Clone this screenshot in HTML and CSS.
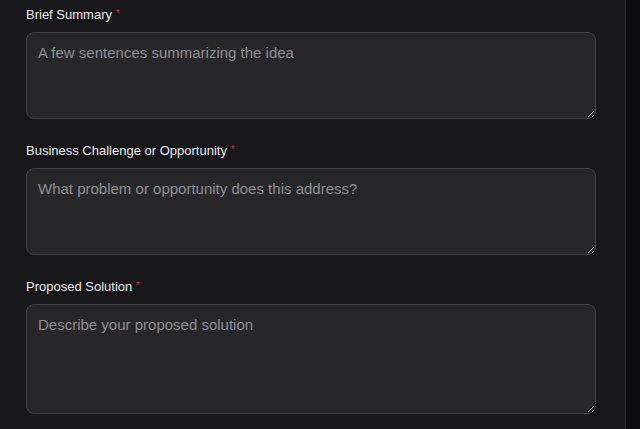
FILE: index.html
```html
<!DOCTYPE html>
<html lang="en">
<head>
<meta charset="utf-8">
<title>Idea form</title>
<link rel="stylesheet" href="styles.css">
</head>
<body>
<div class="layout">
  <main class="panel">
    <form class="form">
      <div class="field">
        <label class="label" for="summary">Brief Summary <span class="req">*</span></label>
        <textarea id="summary" class="input" placeholder="A few sentences summarizing the idea"></textarea>
      </div>
      <div class="field">
        <label class="label" for="challenge">Business Challenge or Opportunity <span class="req">*</span></label>
        <textarea id="challenge" class="input" placeholder="What problem or opportunity does this address?"></textarea>
      </div>
      <div class="field">
        <label class="label" for="solution">Proposed Solution <span class="req">*</span></label>
        <textarea id="solution" class="input input-tall" placeholder="Describe your proposed solution"></textarea>
      </div>
    </form>
  </main>
  <div class="edge"></div>
</div>
</body>
</html>
```

FILE: styles.css
```css
html, body {
  margin: 0;
  padding: 0;
  height: 100%;
  background: #18181b;
  overflow: hidden;
}

.layout {
  display: flex;
  height: 100%;
}

.panel {
  flex: 1;
  border-right: 1px solid #2c2c30;
  background: #18181b;
}

.edge {
  width: 14px;
  background: #0d0d0f;
}

.form {
  width: 570px;
  padding: 5px 0 0 26px;
  display: flex;
  flex-direction: column;
  gap: 22px;
  font-family: "Liberation Sans", Arial, sans-serif;
}

.field {
  display: flex;
  flex-direction: column;
}

.label {
  font-size: 13px;
  line-height: 20px;
  color: #e8e8eb;
  margin-bottom: 7px;
}

.req {
  color: #dc2626;
  font-size: 11px;
  position: relative;
  top: -2px;
}

.input {
  color-scheme: dark;
  box-sizing: border-box;
  width: 570px;
  height: 87px;
  margin: 0;
  padding: 9px 11px 7px;
  border: 1px solid #3f3f46;
  border-radius: 8px;
  background: #27272a;
  color: #e4e4e7;
  font-family: "Liberation Sans", Arial, sans-serif;
  font-size: 15px;
  line-height: 1.5;
  resize: vertical;
  outline: none;
}

.input-tall {
  height: 110px;
}

.input::placeholder {
  color: #8f8f94;
}
```
